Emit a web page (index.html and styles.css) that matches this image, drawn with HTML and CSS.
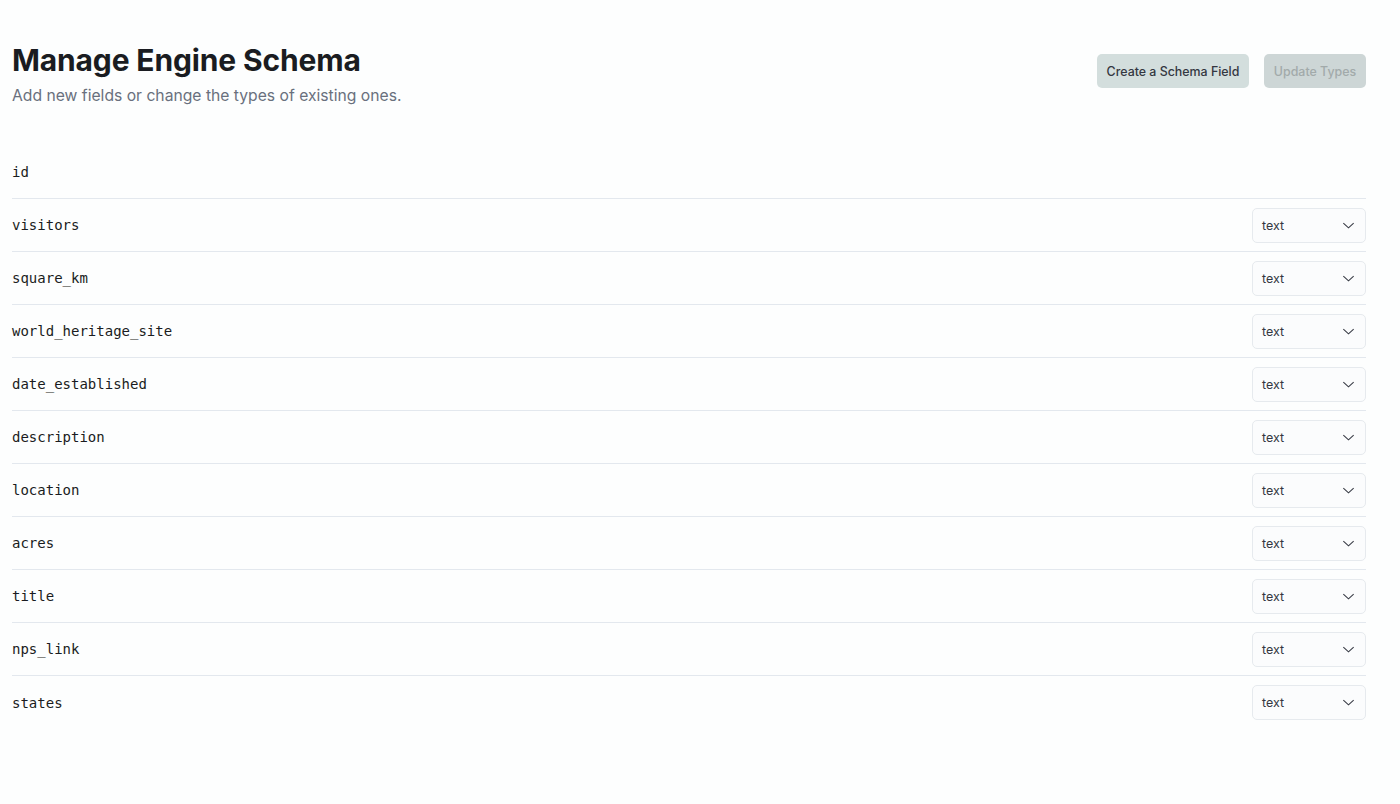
FILE: index.html
```html
<!DOCTYPE html>
<html lang="en">
<head>
<meta charset="utf-8">
<title>Manage Engine Schema</title>
<link rel="stylesheet" href="styles.css">
</head>
<body>
<main class="page">
  <header class="header">
    <div class="header-text">
      <h1 class="title">Manage Engine Schema</h1>
      <p class="subtitle">Add new fields or change the types of existing ones.</p>
    </div>
    <div class="actions">
      <button class="btn btn-create">Create a Schema Field</button>
      <button class="btn btn-update" disabled>Update Types</button>
    </div>
  </header>
  <ul class="fields">
    <li class="field"><span class="field-name">id</span></li>
    <li class="field"><span class="field-name">visitors</span><div class="select"><span>text</span><svg viewBox="0 0 16 16" class="chev"><path d="M2.5 5.5l5.5 5 5.5-5" /></svg></div></li>
    <li class="field"><span class="field-name">square_km</span><div class="select"><span>text</span><svg viewBox="0 0 16 16" class="chev"><path d="M2.5 5.5l5.5 5 5.5-5" /></svg></div></li>
    <li class="field"><span class="field-name">world_heritage_site</span><div class="select"><span>text</span><svg viewBox="0 0 16 16" class="chev"><path d="M2.5 5.5l5.5 5 5.5-5" /></svg></div></li>
    <li class="field"><span class="field-name">date_established</span><div class="select"><span>text</span><svg viewBox="0 0 16 16" class="chev"><path d="M2.5 5.5l5.5 5 5.5-5" /></svg></div></li>
    <li class="field"><span class="field-name">description</span><div class="select"><span>text</span><svg viewBox="0 0 16 16" class="chev"><path d="M2.5 5.5l5.5 5 5.5-5" /></svg></div></li>
    <li class="field"><span class="field-name">location</span><div class="select"><span>text</span><svg viewBox="0 0 16 16" class="chev"><path d="M2.5 5.5l5.5 5 5.5-5" /></svg></div></li>
    <li class="field"><span class="field-name">acres</span><div class="select"><span>text</span><svg viewBox="0 0 16 16" class="chev"><path d="M2.5 5.5l5.5 5 5.5-5" /></svg></div></li>
    <li class="field"><span class="field-name">title</span><div class="select"><span>text</span><svg viewBox="0 0 16 16" class="chev"><path d="M2.5 5.5l5.5 5 5.5-5" /></svg></div></li>
    <li class="field"><span class="field-name">nps_link</span><div class="select"><span>text</span><svg viewBox="0 0 16 16" class="chev"><path d="M2.5 5.5l5.5 5 5.5-5" /></svg></div></li>
    <li class="field"><span class="field-name">states</span><div class="select"><span>text</span><svg viewBox="0 0 16 16" class="chev"><path d="M2.5 5.5l5.5 5 5.5-5" /></svg></div></li>
  </ul>
</main>
</body>
</html>
```

FILE: styles.css
```css
* { box-sizing: border-box; }
html, body { margin: 0; padding: 0; background: #fdfefe; }
body { font-family: Inter, "Noto Sans", sans-serif; color: #1a1c21; }

.page { padding: 42px 34px 0 12px; }

.header {
  display: flex;
  justify-content: space-between;
  align-items: flex-start;
}
.title {
  margin: 0;
  font-size: 30px;
  font-weight: 700;
  line-height: 36px;
  color: #1a1c21;
  letter-spacing: -0.15px;
}
.subtitle {
  margin: 6px 0 0;
  font-size: 15.7px;
  line-height: 24px;
  color: #69707d;
}
.actions {
  display: flex;
  gap: 15px;
  margin-top: 12px;
}
.btn {
  font-family: Inter, "Noto Sans", sans-serif;
  font-size: 12.4px;
  font-weight: 500;
  height: 34px;
  border: none;
  border-radius: 5px;
  padding: 0;
  white-space: nowrap;
}
.btn-create { background: #d3dedd; color: #343741; width: 152px; }
.btn-update { background: #cdd6d6; color: #a2aaaa; width: 102px; }

.fields {
  list-style: none;
  margin: 38px 0 0;
  padding: 0;
}
.field {
  display: flex;
  align-items: center;
  justify-content: space-between;
  height: 53px;
  border-bottom: 1px solid #e3e8ee;
}
.field:last-child { border-bottom: none; }
.field-name {
  font-family: "DejaVu Sans Mono", "Liberation Mono", monospace;
  font-size: 14px;
  color: #1a1c21;
}
.select {
  width: 114px;
  height: 35px;
  border: 1px solid #e6eaee;
  border-radius: 5px;
  background: #fbfcfd;
  display: flex;
  align-items: center;
  justify-content: space-between;
  padding: 0 9px 0 9px;
  font-size: 12.5px;
  color: #343741;
}
.chev { width: 15px; height: 15px; fill: none; stroke: #343741; stroke-width: 1.1; }
```
